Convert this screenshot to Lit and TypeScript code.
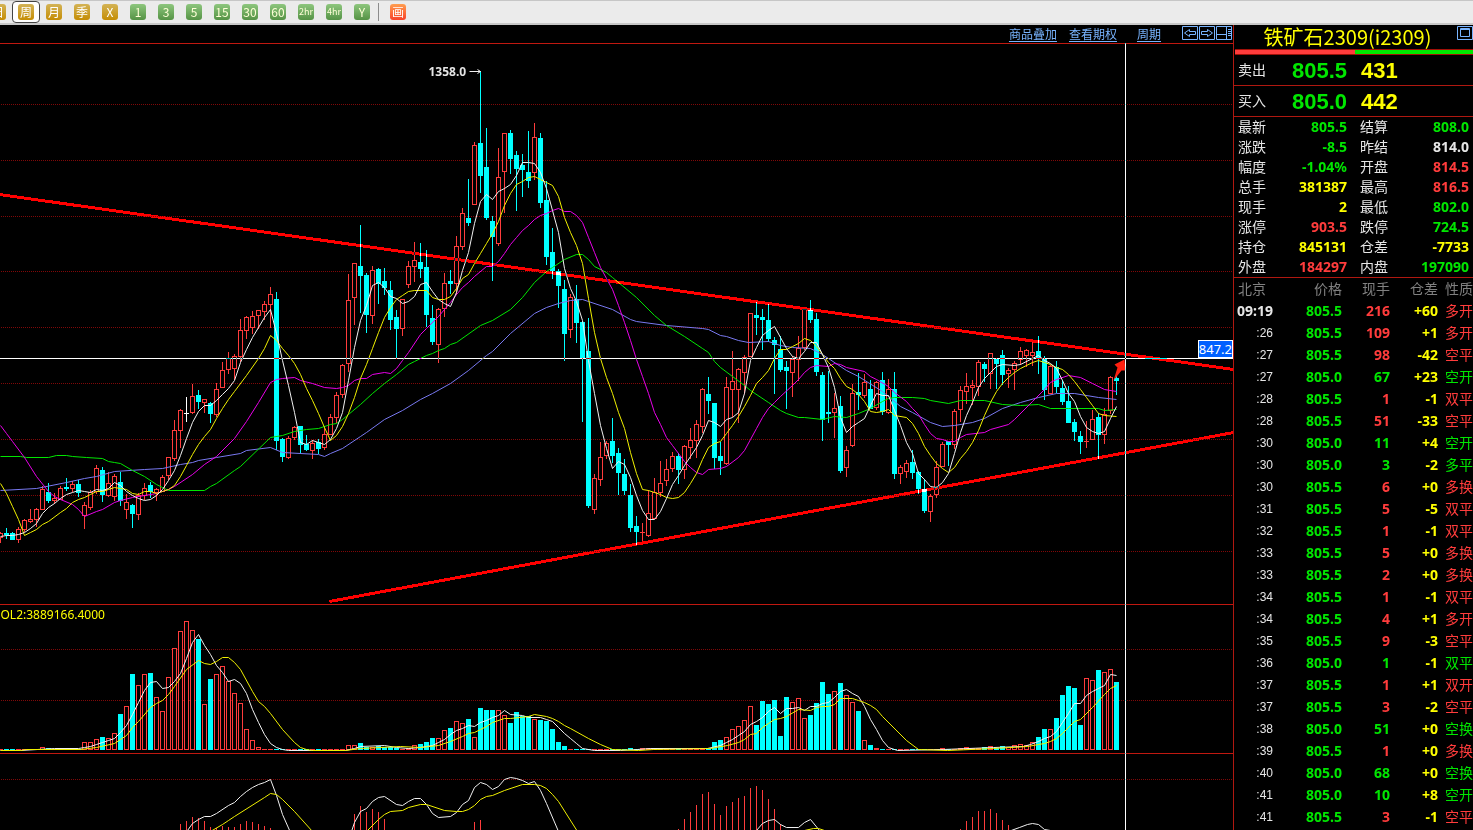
import { LitElement, html, svg, css } from "lit";
import { customElement, property } from "lit/decorators.js";
import { classMap } from "lit/directives/class-map.js";

const STEP = 6;

// One weekly bar per entry: kind (u rise, d fall, w flat), high, body top, body bottom, low.
const CANDLES: [string, number, number, number, number][] = `
u532,533,537,543 d528,533,535,539 d532,533,540,540 u527,529,539,543 u519,520,529,532 u509,519,521,523 u508,509,519,527 u486,489,509,510 d483,492,501,503 u493,498,500,504
u486,488,499,499 d478,487,489,491 u481,484,488,492 d480,484,493,497 u502,505,515,529 u490,492,507,510 u465,468,491,494 d467,470,495,502 u472,483,495,497 u474,476,496,501
d472,482,501,506 u494,502,509,519 d504,505,514,528 u493,495,514,520 u483,488,495,500 d482,485,492,498 u488,489,492,501 u475,477,491,492 u457,457,475,480 u420,430,458,461
u409,410,430,448 w397,413,413,422 u384,396,412,414 d390,395,402,409 u399,399,402,413 d402,403,414,423 u383,389,414,417 u362,370,387,387 u352,358,369,374 u354,356,368,380
u319,330,356,362 u316,317,330,339 u311,316,327,334 u310,310,315,329 u301,304,311,320 u287,294,304,328 d292,299,441,450 d438,439,457,462 u436,438,457,459 u426,427,437,440
d426,426,445,453 d435,444,450,451 u440,443,450,459 d439,442,449,454 u427,434,447,450 u414,417,434,435 u392,395,417,423 u364,365,394,398 u274,300,363,372 u263,263,297,325
d225,266,276,313 d273,275,315,333 u266,270,315,324 d268,269,284,304 d268,281,288,295 d281,290,320,330 d310,317,329,359 u299,299,328,336 u261,266,284,288 u242,260,266,282
d243,262,269,278 d250,267,315,327 d305,318,342,345 u308,309,344,363 u273,283,308,317 d270,281,284,294 u236,246,283,295 u208,213,246,250 d179,218,223,226 u142,145,204,205
d71,143,176,193 d128,167,218,220 d216,221,237,281 u148,177,243,246 u133,133,171,213 d130,133,159,174 d151,155,169,211 d154,165,170,197 d131,172,181,188 u123,137,172,180
d133,138,203,208 d181,200,257,265 d228,252,271,279 d269,271,286,308 d280,289,334,361 u294,297,329,338 d285,299,323,343 d321,322,358,422 d318,351,506,508 u474,478,509,514
u442,457,479,486 u441,443,455,459 d418,441,456,463 d448,453,473,495 d459,474,491,495 d484,495,528,532 d516,526,532,545 u523,532,532,541 u490,513,535,537 u478,492,518,519
u461,483,492,497 u459,469,480,486 u452,456,468,472 d453,456,470,484 u445,446,469,479 u428,440,447,459 u420,424,440,458 u388,389,426,433 d377,394,401,414 d403,403,458,469
d442,456,461,475 u377,387,463,465 u351,381,389,417 u368,369,389,423 u355,357,372,394 u313,313,356,357 d302,315,318,335 d309,317,320,350 d304,320,339,342 d337,340,345,394
d336,349,370,372 d361,367,371,409 u356,359,372,397 u336,348,359,381 u309,309,347,350 d300,310,320,323 d313,319,372,376 d372,375,420,441 d371,412,414,423 u393,408,412,438
d396,406,471,473 u446,450,467,477 u384,393,445,447 d373,392,395,410 u374,382,395,398 d380,389,409,409 u381,382,407,410 d372,380,412,415 u379,389,412,414 d372,389,474,479
u465,467,473,484 u460,463,471,478 d450,462,473,479 d471,472,489,494 d479,489,511,513 u494,496,511,522 u461,467,494,498 u442,444,466,467 d441,441,445,466 u409,411,444,449
u386,390,409,422 u373,386,391,404 u380,385,387,405 u360,362,386,396 d362,364,369,382 u353,353,373,389 d358,359,364,389 d350,355,375,385 u368,370,373,388 u361,363,369,390
u347,351,359,365 u349,350,355,367 u342,352,355,366 d336,351,359,374 d356,359,390,400 u365,366,393,394 d361,367,387,393 d380,388,402,405 d386,401,423,423 d419,422,432,441
d431,436,442,454 u421,441,441,448 u410,419,439,440 d413,417,435,459 u408,414,434,444 u376,377,410,414 d376,378,381,395`
  .trim().split(/\s+/)
  .map((s) => [s[0], ...s.slice(1).split(",").map(Number)] as [string, number, number, number, number]);

// Volume bar tops, keyed by bar index; bars that are absent here are one pixel high.
const VOLUME_TOPS: Record<number, number> = {};
const fillTops = (from: number, tops: number[]) => tops.forEach((t, k) => (VOLUME_TOPS[from + k] = t));
fillTops(7, [747, 748]);
fillTops(14, [742, 742, 739, 737, 738, 733, 714, 706, 674, 685, 674, 673, 697, 711, 677, 648, 631, 621, 630, 639, 704, 679, 674, 666, 681, 693, 703, 729, 740, 747]);
fillTops(58, [745, 745, 743, 747, 747, 746, 747, 747, 748, 749, 748, 745, 744, 742, 738, 738, 730, 728, 721, 723, 719, 737, 708, 710, 710, 710, 715, 723, 712, 716, 716, 719, 720, 721, 729, 742, 746]);
fillTops(105, [748, 749, 748, 748, 748, 748, 748, 748, 748, 748, 748, 748, 748, 748, 742, 740, 737, 729, 726, 720, 706, 725, 701, 704, 700, 736, 697, 702, 698, 718, 715, 703, 682, 694, 691, 683, 695, 702, 711, 740, 745, 748]);
fillTops(157, [748, 749, 749, 748, 747, 748, 748, 747, 746, 748, 746, 747, 745, 744, 745, 742, 737, 729, 729, 718, 695, 686, 688, 725, 678, 680, 670, 672, 669, 682]);

const MA = {
  blue: "0,490 36,488 66,482 84,478 96,476 114,471 144,469 162,468 180,464 192,462 198,460 216,457 240,453 246,450 270,447 282,452 318,454 324,456 330,453 342,448 360,436 366,432 384,419 402,410 420,399 432,393 450,383 468,370 486,355 492,351 510,333 534,313 546,307 558,303 570,300 582,299 588,301 612,309 630,319 636,321 666,325 702,328 708,329 720,335 726,336 738,340 748,342 768,341 780,345 792,347 810,348 822,354 846,370 858,376 882,391 900,406 912,412 930,422 942,426 954,425 972,422 984,418 1002,408 1020,402 1038,397 1056,393 1074,393 1098,397 1116,399",
  green: "0,456 20,456 26,457 48,457 56,455 66,455 72,456 86,457 102,458 108,461 114,462 120,463 132,470 144,476 156,484 162,487 168,490 204,490 210,486 216,483 234,470 240,466 270,437 282,435 294,431 306,429 318,428 330,424 336,423 342,419 348,414 360,404 372,393 384,383 396,374 408,364 414,361 426,355 432,353 438,350 444,348 450,344 456,342 480,325 492,320 510,309 522,297 534,282 546,271 552,267 564,259 576,254 582,254 588,259 594,266 606,272 612,277 636,297 654,315 666,325 684,336 702,348 708,352 714,361 720,367 732,376 744,385 750,390 768,402 780,410 786,413 798,417 804,417 822,419 834,416 846,417 858,413 870,408 882,401 888,398 894,397 912,397 924,398 930,400 948,403 960,400 984,400 1002,404 1020,405 1038,404 1050,408 1068,408 1098,408 1104,410 1116,409",
  magenta: "0,425 6,433 12,441 24,457 36,476 48,491 54,496 60,499 72,504 78,509 84,516 96,511 102,509 114,502 120,500 132,497 144,495 156,493 168,489 174,486 192,474 204,464 216,456 234,438 246,421 258,402 270,382 276,379 282,378 294,377 300,380 312,383 324,387 336,388 342,387 348,385 354,380 360,378 366,378 372,374 384,372 390,373 396,368 402,360 408,352 420,334 426,328 438,316 450,302 456,294 462,287 468,282 474,276 486,266 492,266 498,261 504,253 510,244 516,237 522,230 528,225 534,219 540,215 546,213 552,210 558,208 564,211 570,211 576,215 582,222 588,237 594,252 600,267 606,278 612,289 618,305 624,322 630,340 636,359 642,376 648,393 654,412 660,424 666,437 672,445 678,453 684,461 690,467 696,472 702,474 708,469 720,468 726,466 738,457 744,450 750,439 756,428 762,417 768,408 774,402 780,396 792,385 798,379 804,372 810,367 816,365 828,366 834,363 840,364 846,367 864,371 870,376 876,379 888,386 894,392 906,401 912,408 918,414 924,424 930,433 936,438 942,439 948,441 954,441 960,437 966,434 984,432 990,429 1008,424 1014,419 1032,401 1044,389 1050,382 1056,379 1068,375 1080,377 1092,383 1104,389 1116,391",
  yellow: "0,483 6,493 12,506 18,519 24,535 30,532 36,529 42,524 48,521 60,512 66,508 72,502 78,499 84,497 90,494 96,491 102,491 108,489 114,487 120,488 126,489 132,493 138,494 144,491 150,491 156,493 162,491 168,489 174,485 180,476 186,465 192,454 198,444 204,436 210,429 216,418 222,408 228,399 234,391 246,375 258,358 264,348 270,335 276,340 282,348 288,355 294,363 300,374 306,388 312,400 318,413 324,427 330,440 336,435 342,426 348,413 354,397 360,378 366,364 372,348 378,332 384,317 390,307 396,299 402,295 408,291 414,290 426,290 432,297 438,299 444,299 450,296 456,288 462,278 468,274 474,263 480,253 486,243 492,233 498,221 504,205 510,193 516,184 522,181 528,177 534,176 540,179 546,182 552,185 558,196 564,217 570,232 576,245 582,263 588,298 594,332 600,358 606,377 612,393 618,412 624,428 630,452 636,473 642,489 648,490 654,492 660,494 666,497 672,498 678,497 684,492 690,483 696,473 702,459 708,447 714,443 720,441 726,433 732,425 738,416 744,406 750,395 756,383 762,377 768,370 774,358 780,349 786,349 792,346 798,343 804,338 810,340 816,346 822,354 828,362 834,368 840,378 846,386 852,389 858,394 864,401 870,411 876,412 882,411 888,409 894,415 906,417 912,423 918,433 924,446 930,455 936,463 942,468 948,472 954,467 960,458 966,451 972,442 978,430 984,415 990,402 996,391 1002,383 1008,377 1014,372 1020,368 1032,362 1038,360 1044,362 1050,364 1056,367 1062,369 1068,374 1074,381 1080,389 1086,397 1092,405 1098,413 1104,415 1116,416",
  white: "0,536 6,535 12,535 18,534 24,532 30,528 36,523 42,513 48,507 54,503 60,498 66,494 72,492 78,490 84,491 90,492 96,489 102,490 108,488 114,482 120,485 126,491 132,495 138,498 144,500 150,499 156,495 162,489 168,480 174,470 180,455 186,438 192,422 198,411 204,405 210,405 216,400 222,394 228,388 234,380 240,362 246,349 252,337 258,327 264,317 270,309 276,333 282,360 288,385 294,412 300,442 306,444 312,440 318,442 324,444 330,439 336,428 342,412 348,380 354,347 360,320 366,305 372,285 378,282 384,287 390,296 396,298 402,303 408,301 414,296 420,284 426,282 432,291 438,299 444,303 450,306 456,292 462,270 468,252 474,223 480,201 486,194 492,199 498,191 504,188 510,184 516,175 522,162 528,162 534,163 540,172 546,188 552,210 558,232 564,268 570,288 576,301 582,320 588,360 594,393 600,425 606,448 612,468 618,461 624,464 630,477 636,495 642,510 648,519 654,519 660,511 666,498 672,484 678,475 684,465 690,456 696,447 702,435 708,420 714,422 720,426 726,419 732,417 738,412 744,393 750,360 756,347 762,335 768,330 774,326 780,337 786,348 792,356 798,358 804,351 810,342 816,342 822,354 828,367 834,387 840,417 846,432 852,426 858,422 864,418 870,405 876,393 882,395 888,395 894,410 900,425 906,442 912,453 918,473 924,479 930,486 936,487 942,482 948,473 954,453 960,432 966,415 972,402 978,387 984,378 990,372 996,366 1002,364 1014,365 1020,364 1032,358 1038,355 1044,360 1050,363 1056,368 1062,380 1068,393 1074,401 1080,416 1086,427 1092,431 1098,433 1104,431 1110,418 1116,406",
};

const VOL_WHITE = "0,750 20,750 54,748 78,748 84,747 90,746 96,744 102,742 108,740 114,738 120,732 126,725 132,714 138,702 144,690 150,682 156,681 162,688 168,687 174,681 180,673 186,658 192,642 198,634 204,645 210,654 216,665 222,672 228,681 234,679 240,683 246,693 252,709 258,722 264,734 270,743 276,747 282,749 288,750 345,750 354,748 360,746 384,745 396,747 408,748 420,747 426,746 432,745 438,742 444,739 450,734 456,730 462,728 468,725 474,726 480,722 486,720 492,717 498,715 504,710 510,714 522,715 528,717 540,717 546,719 552,721 558,727 564,733 570,738 576,743 582,748 594,750 620,750 637,749 650,748 707,748 720,745 726,742 732,739 738,735 744,731 750,724 756,721 762,717 768,711 774,707 780,713 786,708 792,708 798,707 804,710 810,706 816,706 822,703 828,702 834,697 840,691 846,689 852,693 858,696 864,706 870,719 876,729 882,740 888,747 897,750 943,749 993,747 1023,746 1030,744 1038,741 1044,738 1050,736 1056,731 1062,722 1068,713 1074,703 1080,703 1086,695 1092,691 1098,688 1104,685 1110,674 1116,675";
const VOL_YELLOW = "0,750 20,750 26,749 80,749 96,747 114,743 120,739 126,735 132,727 138,721 150,707 156,703 162,700 168,694 174,686 186,669 198,660 204,663 210,664 216,661 222,657 228,657 234,662 240,669 252,691 258,701 264,706 270,713 282,729 294,742 300,747 306,749 312,750 345,750 360,748 400,746 420,747 438,745 450,741 462,736 468,733 474,732 480,729 486,726 492,722 504,718 510,718 528,716 534,714 546,716 552,718 558,721 564,725 570,728 588,738 600,744 612,749 638,750 653,749 710,748 727,745 738,742 744,739 750,734 756,733 762,727 768,723 774,719 780,718 786,716 798,709 810,710 816,707 822,706 828,706 834,704 840,698 852,698 858,700 864,702 870,705 876,709 882,716 906,740 918,749 947,750 993,748 1027,746 1038,744 1044,743 1050,741 1056,738 1062,733 1074,721 1080,719 1092,707 1104,694 1110,688 1116,685";

const OSC_WHITE = [
  "187,830 192,823 198,819 204,816 210,816 216,813 228,805 234,802 240,796 246,791 252,787 258,784 264,782 270,779 276,795 282,814 290,832",
  "351,831 354,822 360,811 366,808 372,801 378,797 384,796 396,804 402,805 408,801 414,798 420,798 426,804 432,813 438,817 450,816 456,812 462,804 468,800 474,787 480,782 486,784 492,789 498,786 504,779 510,777 516,778 522,780 528,783 534,781 540,790 546,803 558,831",
  "756,830 762,823 768,820 774,819 780,824 786,827 798,827 804,822 810,819 819,830",
  "1008,831 1019,827 1027,824 1032,823 1038,824 1044,829 1050,830",
];
const OSC_YELLOW = [
  "210,831 222,824 228,820 234,816 264,797 270,793 276,794 282,799 294,811 312,831",
  "366,831 378,819 384,814 390,811 402,810 408,807 420,804 426,804 444,810 456,811 462,811 468,809 474,805 480,799 486,796 492,795 504,790 522,784 534,784 540,785 546,788 552,794 558,801 577,831",
  "804,830 813,828 818,828 824,830",
];
const OSC_BARS: [number, number[]][] = [
  [180, [824, 821, 817, 818, 821, 827, 828, 826, 827, 827, 824, 821, 822, 824, 826, 828]],
  [354, [814, 806, 812, 809, 812, 819]],
  [474, [822, 820]],
  [678, [829, 819, 812, 805, 794, 792, 804, 815, 806, 802, 798, 796, 788, 786, 790, 799, 809, 824]],
  [960, [829, 821, 817, 811, 811, 809, 813, 820, 825]],
];

const PERIODS = [
  ["日", "gold"], ["周", "gold"], ["月", "gold"], ["季", "gold"], ["X", "gold"],
  ["1", "green"], ["3", "green"], ["5", "green"], ["15", "green"], ["30", "green"],
  ["60", "green"], ["2hr", "green"], ["4hr", "green"], ["Y", "green"],
];

// label, value, tone, label, value, tone
const QUOTES = [
  ["最新", "805.5", "g", "结算", "808.0", "g"],
  ["涨跌", "-8.5", "g", "昨结", "814.0", "w"],
  ["幅度", "-1.04%", "g", "开盘", "814.5", "r"],
  ["总手", "381387", "y", "最高", "816.5", "r"],
  ["现手", "2", "y", "最低", "802.0", "g"],
  ["涨停", "903.5", "r", "跌停", "724.5", "g"],
  ["持仓", "845131", "y", "仓差", "-7733", "y"],
  ["外盘", "184297", "r", "内盘", "197090", "g"],
];

// time, price, volume, position change, kind, tone
const TICKS = [
  ["09:19", "805.5", "216", "+60", "多开", "r"],
  [":26", "805.5", "109", "+1", "多开", "r"],
  [":27", "805.5", "98", "-42", "空平", "r"],
  [":27", "805.0", "67", "+23", "空开", "g"],
  [":28", "805.5", "1", "-1", "双平", "r"],
  [":28", "805.5", "51", "-33", "空平", "r"],
  [":30", "805.0", "11", "+4", "空开", "g"],
  [":30", "805.0", "3", "-2", "多平", "g"],
  [":30", "805.5", "6", "+0", "多换", "r"],
  [":31", "805.5", "5", "-5", "双平", "r"],
  [":32", "805.5", "1", "-1", "双平", "r"],
  [":33", "805.5", "5", "+0", "多换", "r"],
  [":33", "805.5", "2", "+0", "多换", "r"],
  [":34", "805.5", "1", "-1", "双平", "r"],
  [":34", "805.5", "4", "+1", "多开", "r"],
  [":35", "805.5", "9", "-3", "空平", "r"],
  [":36", "805.0", "1", "-1", "双平", "g"],
  [":37", "805.5", "1", "+1", "双开", "r"],
  [":37", "805.5", "3", "-2", "空平", "r"],
  [":38", "805.0", "51", "+0", "空换", "g"],
  [":39", "805.5", "1", "+0", "多换", "r"],
  [":40", "805.0", "68", "+0", "空换", "g"],
  [":41", "805.0", "10", "+8", "空开", "g"],
  [":41", "805.5", "3", "-1", "空平", "r"],
];

@customElement("period-bar")
export class PeriodBar extends LitElement {
  @property() selected = "周";

  static styles = css`
    :host { display: block; overflow: hidden; }
    .bar {
      display: flex; align-items: center; box-sizing: border-box; height: 25px;
      margin-left: -16px; background: #ebebeb;
      border-top: 1px solid #c6c6c6; border-bottom: 2px solid #c8c8c8;
    }
    .period {
      display: flex; align-items: center; justify-content: center; flex: none;
      width: 28px; height: 22px; padding: 0; box-sizing: border-box;
      border: 1px solid transparent; border-radius: 4px; background: none; cursor: pointer;
    }
    .period.on { background: #fff; border-color: #444; }
    .chip {
      display: block; width: 16px; height: 16px; border-radius: 3px; overflow: hidden;
      font: 12px/16px "Noto Sans CJK SC", sans-serif; text-align: center; color: #fff;
      white-space: nowrap;
    }
    .gold { background: linear-gradient(#d3b356, #c58d04); }
    .green { background: linear-gradient(#8dc67d, #559345); color: #ffffd8; }
    .orange { background: linear-gradient(#ff9e50, #f8432a); }
    .long { font-size: 9px; }
    .rule { flex: none; width: 1px; height: 18px; margin: 0 5px 0 2px; background: #8c8c8c; }
  `;

  render() {
    return html`<nav class="bar" aria-label="周期">
      ${PERIODS.map(([name, tone]) => html`<button class=${classMap({ period: true, on: name === this.selected })}
        @click=${() => (this.selected = name)}><span class=${classMap({ chip: true, [tone]: true, long: name.length > 2 })}>${name}</span></button>`)}
      <span class="rule"></span>
      <button class="period"><span class="chip orange">画</span></button>
    </nav>`;
  }
}

@customElement("chart-area")
export class ChartArea extends LitElement {
  static styles = css`
    :host {
      display: flex; flex-direction: column; position: relative; min-width: 0; overflow: hidden;
      background: #000; font-family: "Noto Sans", "Noto Sans CJK SC", sans-serif;
    }
    .head { display: flex; justify-content: flex-end; flex: none; height: 18px; }
    .link {
      margin-right: 12px; color: #78b4ff; font: 12px/18px "Noto Sans CJK SC", sans-serif;
      text-decoration: underline; text-underline-offset: 2px;
    }
    .link.gap { margin: 0 21px 0 8px; }
    .tool {
      display: block; flex: none; width: 16px; height: 15px; margin: 1px 1px 0 0; padding: 0;
      border: 0; background: none; cursor: pointer;
    }
    .tool svg { display: block; width: 16px; height: 15px; fill: none; stroke: #78b4ff; }
    .panel { display: block; width: 100%; flex: none; border-top: 1px solid #c01810; }
    .price { height: 560px; }
    .volume { height: 148px; }
    .osc { flex: 1; min-height: 76px; }
    .grid { stroke: #800808; stroke-dasharray: 1 1; }
    .u { stroke: #ff3c3c; fill: #000; }
    .d { stroke: #0ff; fill: #0ff; }
    .w { stroke: #fff; fill: #fff; }
    .crisp { shape-rendering: crispEdges; }
    .line { fill: none; stroke-width: 1; }
    .lw { stroke: #f0f0f0; }
    .ly { stroke: #f0f000; }
    .lm { stroke: #e800e8; }
    .lg { stroke: #00e600; }
    .lb { stroke: #7878f0; }
    .trend { stroke: #f00; stroke-width: 3; mix-blend-mode: difference; }
    .peak { fill: #e4e4e4; font-size: 12px; font-weight: 700; }
    .name { fill: #ff0; font-size: 12px; }
    .hair { position: absolute; background: #fff; mix-blend-mode: difference; pointer-events: none; }
    .hair.x { left: 0; right: 0; top: 333px; height: 1px; }
    .hair.y { left: 1125px; top: 18px; bottom: 0; width: 1px; }
    .tag {
      position: absolute; right: 0; top: 315px; box-sizing: border-box; height: 18px;
      border: 1px solid #fff; background: #0060ff; color: #fff; font-size: 13px; line-height: 16px;
    }
  `;

  private gridLines(ys: number[]) {
    return ys.map((y) => svg`<line class="grid crisp" x1=".5" x2="100%" y1=${y} y2=${y}></line>`);
  }

  private candle([kind, high, top, bottom, low]: [string, number, number, number, number], i: number) {
    const x = i * STEP;
    return svg`<g class=${kind}>
      <path d="M${x} ${high - 0.5}V${low - 0.5}"></path>
      ${bottom - top < 1
        ? svg`<path d="M${x - 2.5} ${top}H${x + 2.5}"></path>`
        : svg`<rect x=${x - 2} y=${top} width="4" height=${bottom - top - (kind === "d" ? 1 : 0)}></rect>`}
    </g>`;
  }

  render() {
    return html`
      <header class="head">
        <a class="link" href="#overlay">商品叠加</a>
        <a class="link" href="#options">查看期权</a>
        <a class="link gap" href="#period">周期</a>
        <button class="tool" aria-label="左移"><svg viewBox="0 0 16 15"><path d="M.5.5h15v13H.5zM7.500 3.500v2h6v3h-6v2L2.500 7z"/></svg></button>
        <button class="tool" aria-label="右移"><svg viewBox="0 0 16 15"><path d="M.5.5h15v13H.5zM8.500 3.500v2h-6v3h6v2L13.500 7z"/></svg></button>
        <button class="tool" aria-label="布局"><svg viewBox="0 0 16 15"><path d="M.5.5h15v13H.5zM10.500.5v13M.5 8.500h10M12 3.500h3M12 5.500h3M12 7.500h3M12 9.500h3"/></svg></button>
      </header>
      <svg class="panel price" role="img" aria-label="周K线">
        <g transform="translate(.5 -43.500)">
          ${this.gridLines([104, 160, 216, 271, 327, 383, 439, 495, 551])}
          ${CANDLES.map((c, i) => this.candle(c, i))}
          <polyline class="line lb" points=${MA.blue}></polyline>
          <polyline class="line lg" points=${MA.green}></polyline>
          <polyline class="line lm" points=${MA.magenta}></polyline>
          <polyline class="line ly" points=${MA.yellow}></polyline>
          <polyline class="line lw" points=${MA.white}></polyline>
          <text class="peak" x="428" y="75">1358.0</text>
          <path class="line lw" d="M469 71H480M477 69L480 71L477 73"></path>
          <line class="trend crisp" x1="-1" y1="194" x2="1233" y2="369"></line>
          <line class="trend crisp" x1="329" y1="601" x2="1233" y2="432"></line>
          <path fill="#ff2010" d="M1124 359L1114 364L1117 367L1113 380L1121 370L1125 370Z"></path>
        </g>
      </svg>
      <svg class="panel volume" role="img" aria-label="成交量">
        <g transform="translate(.5 -604.500)">
          ${this.gridLines([649, 700])}
          ${CANDLES.map(([kind], i) => {
            const top = VOLUME_TOPS[i] ?? 749;
            return svg`<rect class=${kind === "d" ? "d" : "u"} x=${i * STEP - 2} y=${top} width="4" height=${749 - top || 0.01}></rect>`;
          })}
          <polyline class="line lw" points=${VOL_WHITE}></polyline>
          <polyline class="line ly" points=${VOL_YELLOW}></polyline>
          <text class="name" x="0" y="618">OL2:3889166.4000</text>
        </g>
      </svg>
      <svg class="panel osc" role="img" aria-label="指标">
        <g transform="translate(.5 -753.500)">
          ${this.gridLines([779])}
          ${OSC_BARS.map(([x0, tops]) => tops.map((t, k) => svg`<path class="u" d="M${x0 + k * STEP} ${t - 0.5}V831"></path>`))}
          ${OSC_WHITE.map((p) => svg`<polyline class="line lw" points=${p}></polyline>`)}
          ${OSC_YELLOW.map((p) => svg`<polyline class="line ly" points=${p}></polyline>`)}
        </g>
      </svg>
      <div class="hair x"></div>
      <div class="hair y"></div>
      <div class="tag">847.2</div>`;
  }
}

@customElement("quote-panel")
export class QuotePanel extends LitElement {
  static styles = css`
    :host {
      display: flex; flex-direction: column; overflow: hidden; background: #000; color: #e6e6e6;
      border-left: 1px solid #b01810; font: 14px/20px "Noto Sans", "Noto Sans CJK SC", sans-serif;
    }
    .top { display: flex; flex: none; height: 24px; }
    .title {
      flex: 1; margin: 0; padding-left: 4px; text-align: center; color: #ff0;
      font: 20px/24px "Noto Sans CJK SC", sans-serif; white-space: nowrap;
    }
    .max { flex: none; width: 16px; height: 15px; margin-top: 1px; padding: 0; border: 0; background: none; }
    .max svg { display: block; fill: none; stroke: #78b4ff; }
    .ratio { display: flex; flex: none; height: 4px; margin-left: 1px; border-top: 1px solid #a01008; border-bottom: 1px solid #a01008; }
    .sell { flex: 120; background: #ff3c3c; }
    .buy { flex: 118; background: #00e600; }
    .side {
      display: grid; grid-template-columns: 28px 67px 1fr; column-gap: 14px; align-items: center;
      flex: none; height: 30px; padding-left: 4px; border-bottom: 1px solid #b01810;
    }
    .side .label { padding-bottom: 2px; }
    .big { padding-top: 2px; font: 700 22px/28px "Liberation Sans", sans-serif; text-align: right; }
    .big.lots { text-align: left; }
    .label { font-family: "Noto Sans CJK SC", sans-serif; font-weight: 400; }
    .quotes, .ticks { width: 239px; border-collapse: collapse; table-layout: fixed; flex: none; }
    .block { flex: none; border-bottom: 1px solid #b01810; }
    td, th { box-sizing: border-box; padding: 0; white-space: nowrap; text-align: right; font-weight: 700; }
    .quotes td, .quotes th { height: 20px; line-height: 20px; }
    .quotes .label { width: 32px; padding-left: 4px; text-align: left; font-weight: 400; line-height: 18px; vertical-align: top; }
    .quotes .label.second { width: 41px; padding-left: 13px; }
    .quotes .end { width: 85px; padding-right: 4px; }
    .ticks td, .ticks th { height: 22px; line-height: 22px; }
    .ticks th { color: #808080; font-family: "Noto Sans CJK SC", sans-serif; font-weight: 400; line-height: 20px; vertical-align: top; }
    .ticks th.t { text-align: left; padding-left: 4px; }
    .t { width: 39px; }
    .p { width: 69px; }
    .n { width: 48px; }
    .ticks .k {
      width: 35px; padding-left: 7px; text-align: left; vertical-align: top;
      font: 400 14px/20px "Noto Sans CJK SC", sans-serif;
    }
    td.t.minor { font: 12px/22px "Liberation Sans", sans-serif; }
    .g { color: #00e600; }
    .r { color: #ff3c3c; }
    .y { color: #ff0; }
    .w { color: #e6e6e6; }
  `;

  render() {
    return html`
      <header class="top">
        <h1 class="title">铁矿石2309(i2309)</h1>
        <button class="max" aria-label="最大化"><svg width="16" height="15" viewBox="0 0 16 15"><path d="M.5.5h15v13H.5zM3.500 2.500h9v8h-9zM3 3.500h10"/></svg></button>
      </header>
      <div class="ratio"><span class="sell"></span><span class="buy"></span></div>
      <div class="side"><span class="label">卖出</span><span class="big g">805.5</span><span class="big lots y">431</span></div>
      <div class="side"><span class="label">买入</span><span class="big g">805.0</span><span class="big lots y">442</span></div>
      <div class="block">
        <table class="quotes">
          ${QUOTES.map(([a, av, at, b, bv, bt]) => html`<tr>
            <th class="label" scope="row">${a}</th><td class=${at}>${av}</td>
            <th class="label second" scope="row">${b}</th><td class="end ${bt}">${bv}</td>
          </tr>`)}
        </table>
      </div>
      <table class="ticks">
        <thead><tr><th class="t">北京</th><th class="p">价格</th><th class="n">现手</th><th class="n">仓差</th><th class="k">性质</th></tr></thead>
        <tbody>
          ${TICKS.map(([time, price, lots, diff, kind, tone]) => html`<tr>
            <td class=${classMap({ t: true, minor: time.length < 4 })}>${time}</td><td class="g">${price}</td>
            <td class=${tone}>${lots}</td><td class="y">${diff}</td><td class="k ${tone}">${kind}</td>
          </tr>`)}
        </tbody>
      </table>`;
  }
}

@customElement("app-root")
export class AppRoot extends LitElement {
  static styles = css`
    :host { display: flex; flex-direction: column; height: 100vh; overflow: hidden; background: #000; }
    .bar { flex: none; }
    .main { display: grid; grid-template-columns: minmax(0, 1fr) 240px; grid-template-rows: minmax(0, 1fr); flex: 1; min-height: 0; }
  `;

  render() {
    return html`
      <period-bar class="bar"></period-bar>
      <main class="main">
        <chart-area></chart-area>
        <quote-panel></quote-panel>
      </main>`;
  }
}
